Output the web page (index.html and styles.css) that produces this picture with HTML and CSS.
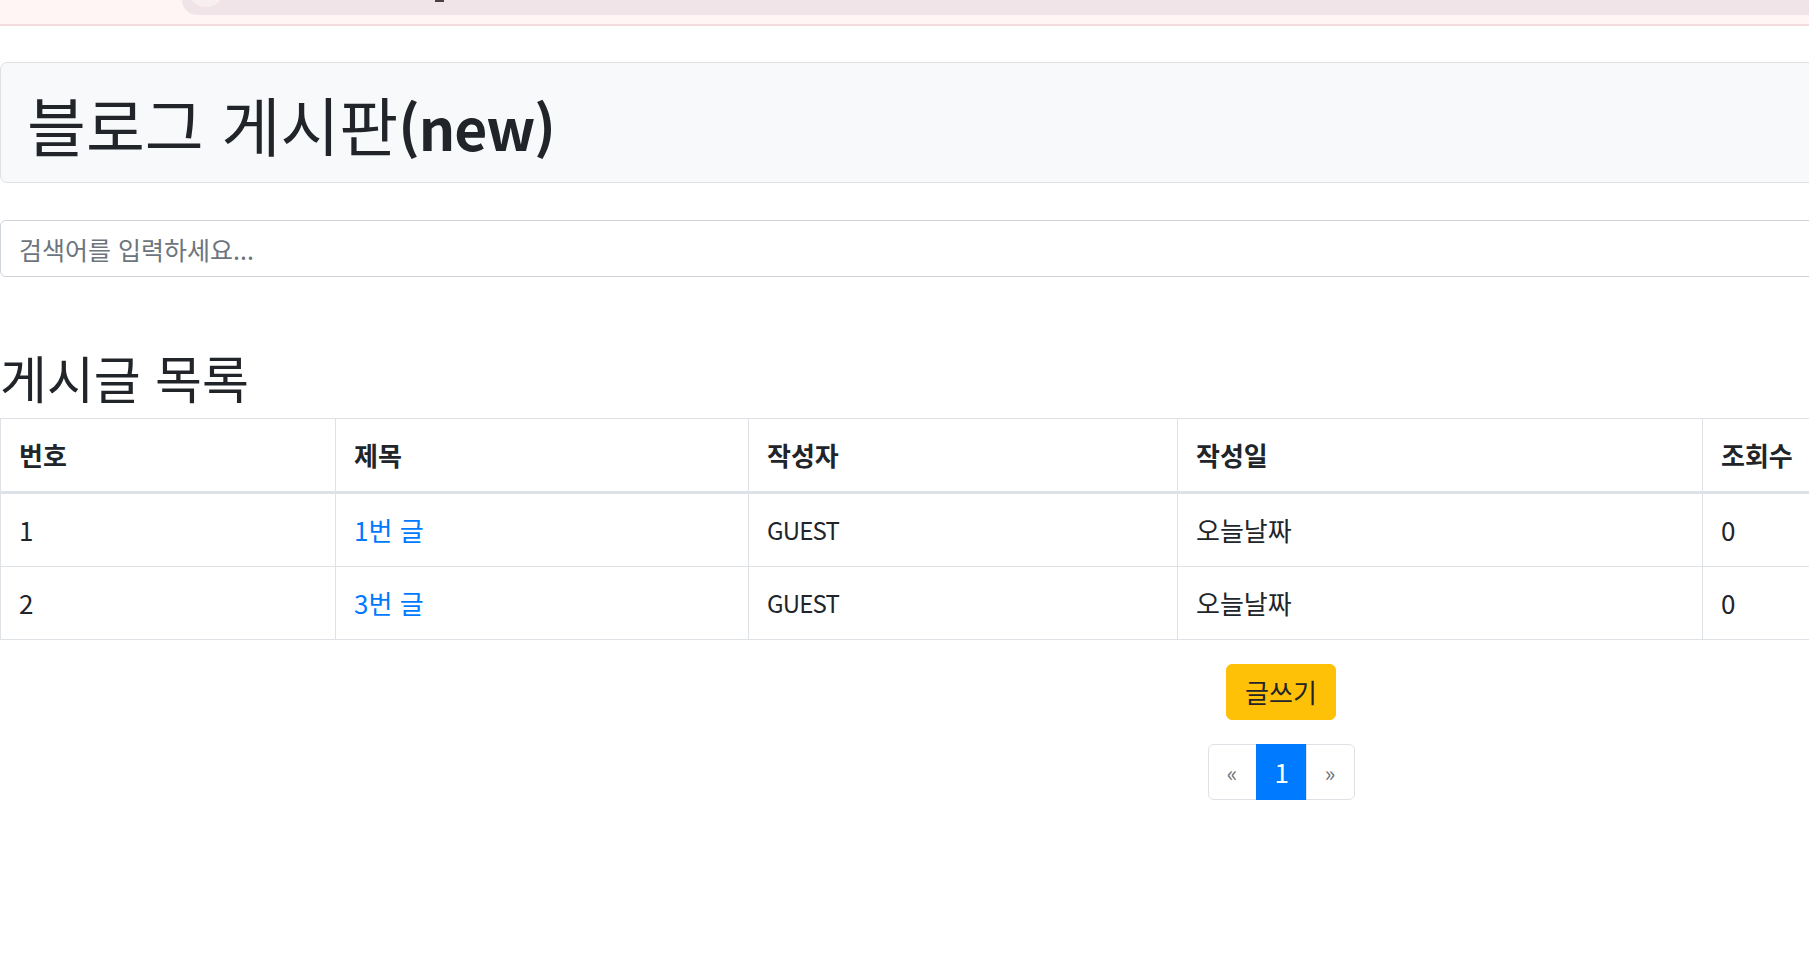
FILE: index.html
```html
<!DOCTYPE html>
<html lang="ko">
<head>
<meta charset="utf-8">
<title>블로그 게시판</title>
<link rel="stylesheet" href="styles.css">
</head>
<body>
<div class="topbar">
  <div class="pill">
    <div class="pill-circle"></div>
    <div class="pill-mark"></div>
  </div>
</div>
<div class="page">
  <div class="jumbotron">
    <h1 class="title">블로그 게시판<span class="title-latin">(new)</span></h1>
  </div>
  <input class="search" type="text" placeholder="검색어를 입력하세요...">
  <h2 class="section-title">게시글 목록</h2>
  <table class="board">
    <thead>
      <tr>
        <th class="col-no">번호</th>
        <th class="col-title">제목</th>
        <th class="col-writer">작성자</th>
        <th class="col-date">작성일</th>
        <th class="col-views">조회수</th>
      </tr>
    </thead>
    <tbody>
      <tr>
        <td>1</td>
        <td><a class="post-link" href="#">1번 글</a></td>
        <td class="latin">GUEST</td>
        <td>오늘날짜</td>
        <td>0</td>
      </tr>
      <tr>
        <td>2</td>
        <td><a class="post-link" href="#">3번 글</a></td>
        <td class="latin">GUEST</td>
        <td>오늘날짜</td>
        <td>0</td>
      </tr>
    </tbody>
  </table>
  <div class="actions">
    <button class="btn-write" type="button">글쓰기</button>
    <ul class="pagination">
      <li class="page-item"><a class="page-link muted" href="#">&laquo;</a></li>
      <li class="page-item"><a class="page-link active" href="#">1</a></li>
      <li class="page-item"><a class="page-link muted" href="#">&raquo;</a></li>
    </ul>
  </div>
</div>
</body>
</html>
```
FILE: styles.css
```css
* { box-sizing: border-box; }

html, body {
  margin: 0;
  padding: 0;
  overflow: hidden;
  background: #ffffff;
}

body {
  font-family: "Noto Sans CJK KR", "Noto Sans", sans-serif;
  font-size: 26px;
  line-height: 36px;
  color: #212529;
}

.topbar {
  height: 26px;
  background: #fff5f5;
  border-bottom: 2px solid #f2dcdf;
  display: flex;
  padding-left: 182px;
}

.pill {
  flex: 1;
  height: 15px;
  background: #f1e4e8;
  border-bottom-left-radius: 16px;
  display: flex;
  align-items: flex-start;
  overflow: hidden;
}

.pill-circle {
  width: 36px;
  height: 36px;
  margin-top: -29px;
  margin-left: 6px;
  border-radius: 50%;
  background: #f8eff1;
  flex: none;
}

.pill-mark {
  width: 9px;
  height: 2px;
  margin-left: 211px;
  background: #4a4044;
  flex: none;
}

.page {
  width: 2562px;
  padding-top: 36px;
}

.jumbotron {
  background: #f8f9fa;
  border: 1px solid #dfe2e5;
  border-radius: 7px;
  height: 121px;
  padding: 24px 26px 0;
  margin-bottom: 37px;
}

.title {
  margin: 0;
  font-size: 64px;
  font-weight: 400;
  line-height: 72px;
  color: #212529;
}

.title-latin {
  font-size: 57px;
  font-weight: 700;
  letter-spacing: -1px;
}

.search {
  display: block;
  width: 100%;
  height: 57px;
  padding: 0 18px;
  font-family: inherit;
  font-size: 25px;
  color: #495057;
  background: #ffffff;
  border: 1px solid #ced4da;
  border-radius: 6px;
  margin: 0 0 72px;
  outline: none;
}

.search::placeholder {
  color: #6c757d;
}

.section-title {
  margin: 0 0 12px;
  font-size: 51px;
  font-weight: 400;
  line-height: 57px;
  color: #212529;
}

.board {
  width: 100%;
  table-layout: fixed;
  border-collapse: collapse;
  border: 1px solid #dee2e6;
  margin-bottom: 24px;
}

.board th,
.board td {
  border: 1px solid #dee2e6;
  padding: 18px;
  text-align: left;
  vertical-align: top;
  line-height: 36px;
}

.board th {
  font-weight: 700;
  border-bottom: 3px solid #dee2e6;
}

.board td.latin {
  font-size: 24px;
  letter-spacing: -0.8px;
}

.col-no { width: 335px; }
.col-title { width: 413px; }
.col-writer { width: 429px; }
.col-date { width: 525px; }

.post-link {
  color: #007bff;
  text-decoration: none;
}

.actions {
  display: flex;
  flex-direction: column;
  align-items: center;
  gap: 24px;
}

.btn-write {
  font-family: inherit;
  font-size: 26px;
  line-height: 36px;
  height: 56px;
  padding: 9px 18px;
  color: #212529;
  background: #ffc107;
  border: 1px solid #ffc107;
  border-radius: 6px;
}

.pagination {
  display: flex;
  list-style: none;
  margin: 0;
  padding: 0;
}

.page-link {
  display: block;
  padding: 12px 18px;
  line-height: 30px;
  height: 56px;
  min-width: 49px;
  text-align: center;
  text-decoration: none;
  border: 1px solid #dee2e6;
  background: #ffffff;
  font-size: 24px;
}

.page-item:first-child .page-link {
  border-radius: 6px 0 0 6px;
}

.page-item:last-child .page-link {
  border-radius: 0 6px 6px 0;
}

.page-item + .page-item .page-link {
  margin-left: -1px;
}

.page-link.muted {
  color: #6c757d;
  font-size: 22px;
}

.page-link.active {
  color: #ffffff;
  background: #007bff;
  border-color: #007bff;
  width: 51px;
  font-size: 26px;
}
```
